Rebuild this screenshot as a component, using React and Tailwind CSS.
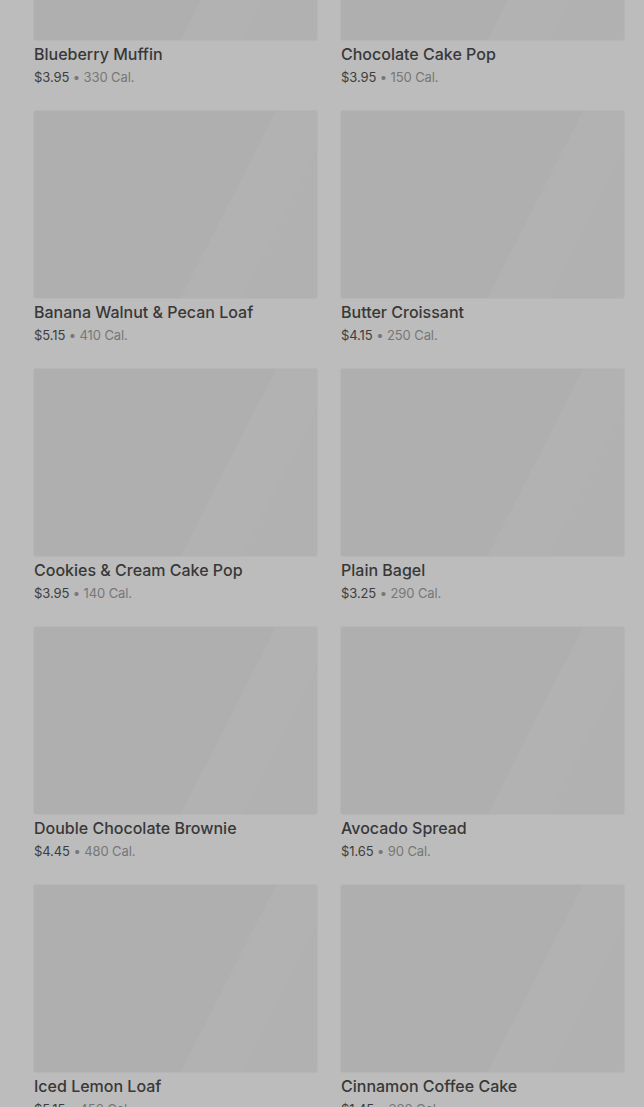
const items = [
  { name: 'Blueberry Muffin', price: '$3.95', cal: '330 Cal.' },
  { name: 'Chocolate Cake Pop', price: '$3.95', cal: '150 Cal.' },
  { name: 'Banana Walnut & Pecan Loaf', price: '$5.15', cal: '410 Cal.' },
  { name: 'Butter Croissant', price: '$4.15', cal: '250 Cal.' },
  { name: 'Cookies & Cream Cake Pop', price: '$3.95', cal: '140 Cal.' },
  { name: 'Plain Bagel', price: '$3.25', cal: '290 Cal.' },
  { name: 'Double Chocolate Brownie', price: '$4.45', cal: '480 Cal.' },
  { name: 'Avocado Spread', price: '$1.65', cal: '90 Cal.' },
  { name: 'Iced Lemon Loaf', price: '$5.15', cal: '450 Cal.' },
  { name: 'Cinnamon Coffee Cake', price: '$1.45', cal: '380 Cal.' },
];

const ProductCard = ({ item }) => (
  <div className="flex flex-col">
    <div className="h-[187px] w-full rounded-[2px] bg-[linear-gradient(117deg,#afafaf_0%,#afafaf_64%,#b2b2b2_64%,#b2b2b2_80%,#b1b1b1_80%,#b1b1b1_100%)] shadow-[0_0_0_1px_#b6b6b6]"></div>
    <h3 className="mt-1 text-[16px] leading-5 font-medium text-[#383838]">{item.name}</h3>
    <p className="mt-[3px] text-[13px] leading-5 tracking-[-0.1px] text-[#3e3e3e]">
      {item.price}
      <span className="text-[#777777]"> • {item.cal}</span>
    </p>
  </div>
);

const App = () => {
  return (
    <div className="h-[1107px] overflow-hidden bg-[#bcbcbc] font-['Inter',sans-serif]">
      <div className="-mt-[147px] grid grid-cols-2 gap-x-6 gap-y-[24px] pl-[34px] pr-[20px]">
        {items.map((item) => (
          <ProductCard key={item.name} item={item} />
        ))}
      </div>
    </div>
  );
};

export default App;
